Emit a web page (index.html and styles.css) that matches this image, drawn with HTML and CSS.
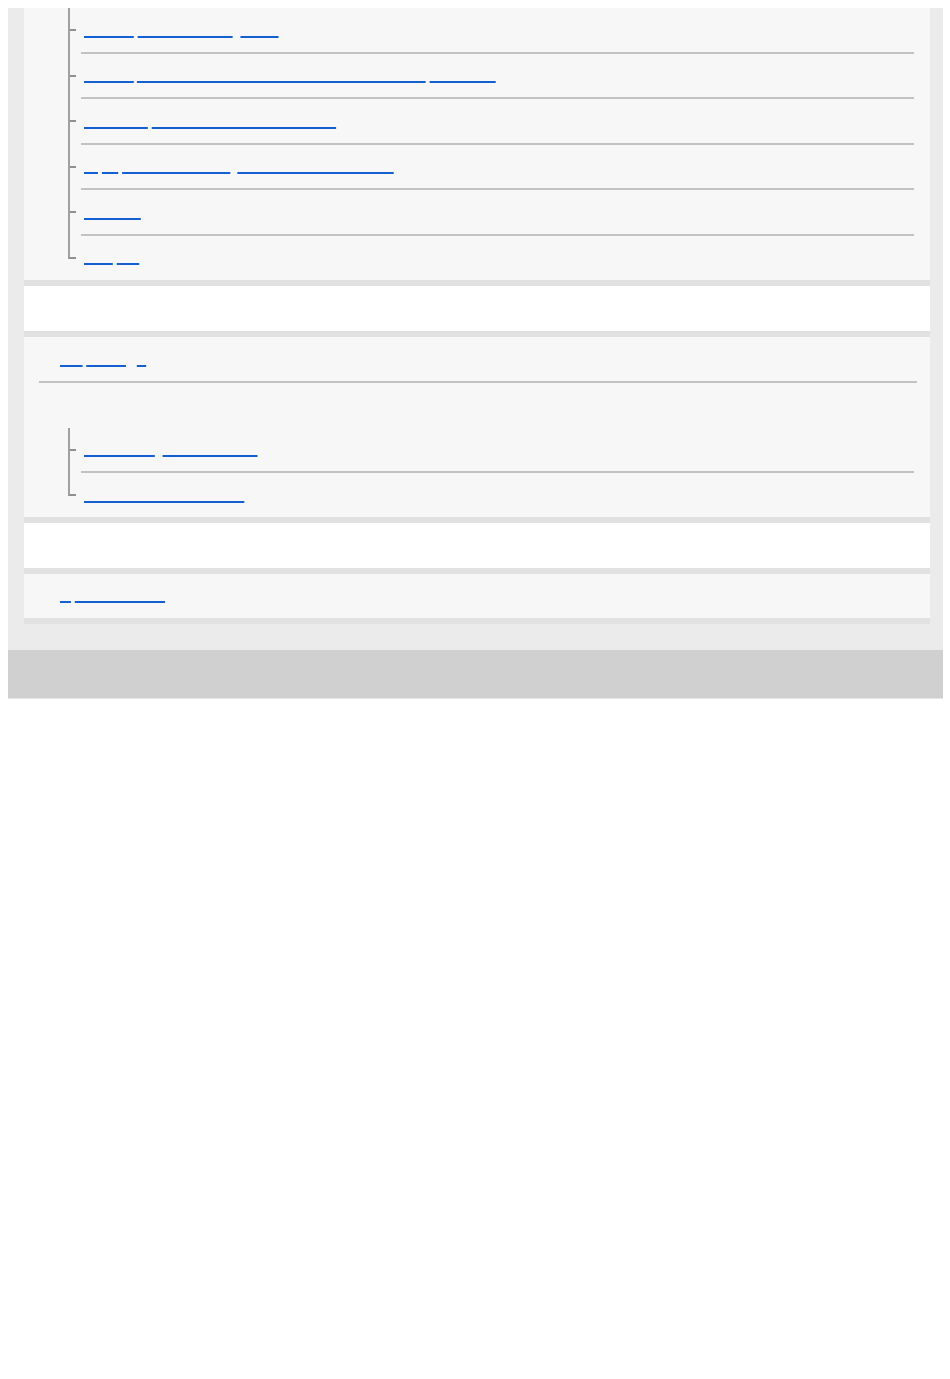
FILE: index.html
```html
<!DOCTYPE html>
<html lang="en">
<head>
    <meta charset="UTF-8">
    <meta name="viewport" content="width=device-width, initial-scale=1.0">
    <title>Help Guide</title>
    <link rel="stylesheet" href="styles.css">
</head>
<body>
    <div class="page">
        <!-- Topic list (continued) -->
        <div class="card">
            <ul class="tree">
                <li><a href="#"><span>Camera</span> <span>Recommended</span>&nbsp; <span>Focus</span></a></li>
                <li><a href="#"><span>Camera</span> <span>Adjusting the white balance for any scene type</span> <span>Brightness</span></a></li>
                <li><a href="#"><span>Recording</span> <span>Using the remote commander</span></a></li>
                <li><a href="#"><span>ID</span> <span>Fn</span> <span>Function Settings</span>&nbsp; <span>Assigning your Functions</span></a></li>
                <li><a href="#"><span>Playback</span></a></li>
                <li><a href="#"><span>Help</span> <span>info</span></a></li>
            </ul>
        </div>

        <div class="card blank"></div>

        <!-- Related topics -->
        <div class="card">
            <h3 class="card-title"><a href="#"><span>Top</span> <span>Topics</span>&nbsp;&nbsp; <span>A</span></a></h3>
            <ul class="tree spaced">
                <li><a href="#"><span>Connection</span>&nbsp; <span>Recommended</span></a></li>
                <li><a href="#"><span>Connecting to a computer</span></a></li>
            </ul>
        </div>

        <div class="card blank"></div>

        <div class="card single">
            <a href="#"><span>Q</span> <span>Configurations</span></a>
        </div>
    </div>

    <footer></footer>
</body>
</html>
```

FILE: styles.css
```css
body {
    margin: 0;
    font-family: "Liberation Sans", Arial, sans-serif;
    font-size: 14px;
    line-height: 20px;
    color: #333;
    background: #fff;
}

.page {
    margin: 8px 8px 0 8px;
    width: 935px;
    padding: 0 13px 26px 16px;
    box-sizing: border-box;
    background-color: #ebebeb;
}

/* links: the glyphs do not show, only the underline */
a {
    color: transparent;
    text-decoration: none;
}

a span {
    text-decoration: underline;
    text-decoration-color: #1560d0;
    text-decoration-thickness: 1.5px;
    text-decoration-skip-ink: none;
}

.card {
    background-color: #f7f7f7;
    border-bottom: 6px solid #e1e1e1;
    box-sizing: border-box;
}

.card.blank {
    height: 51px;
    background-color: #fff;
}

.card.single {
    padding: 11.5px 0 12.5px 36px;
}

.card-title {
    margin: 0 13px 0 15px;
    padding: 12.5px 0 11.5px 21px;
    font-size: 14px;
    font-weight: normal;
    border-bottom: 2px solid #c2c2c2;
}

.tree {
    list-style-type: none;
    margin: 0 16px 0 57px;
    padding: 0;
}

.tree.spaced {
    margin-top: 45px;
}

.tree li {
    position: relative;
    padding: 11.5px 0 12.1px 3px;
    border-bottom: 2px solid #c2c2c2;
}

.tree li:last-child {
    border-bottom: none;
}

/* branch line and tick */
.tree li::before {
    content: "";
    position: absolute;
    left: -13px;
    top: 0;
    width: 6px;
    height: 21px;
    border-left: 2px solid #a0a0a0;
    border-bottom: 2px solid #909090;
}

.tree li::after {
    content: "";
    position: absolute;
    left: -13px;
    top: 22px;
    bottom: -2px;
    border-left: 2px solid #a0a0a0;
}

.tree li:last-child::after {
    display: none;
}

footer {
    margin: 0 8px;
    width: 935px;
    height: 48px;
    background-color: #d0d0d0;
    border-bottom: 1px solid #e4e4e4;
}
```
